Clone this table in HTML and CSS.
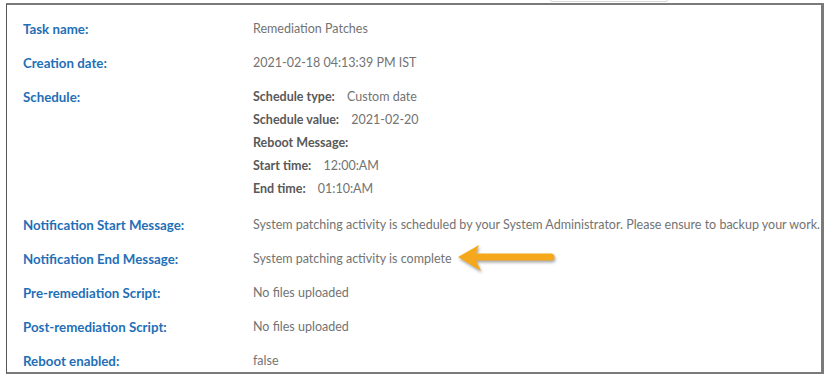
FILE: index.html
```html
<!DOCTYPE html>
<html lang="en">
<head>
  <meta charset="UTF-8" />
  <title>Task details</title>
  <link rel="stylesheet" href="styles.css">
</head>
<body>

<div class="topbox"></div>

<div class="panel">
  <div class="row">
    <div class="label">Task name:</div>
    <div class="value">Remediation Patches</div>
  </div>
  <div class="row">
    <div class="label">Creation date:</div>
    <div class="value">2021-02-18 04:13:39 PM IST</div>
  </div>
  <div class="row">
    <div class="label">Schedule:</div>
    <div class="value schedule">
      <div><b>Schedule type:</b> Custom date</div>
      <div><b>Schedule value:</b> 2021-02-20</div>
      <div><b>Reboot Message:</b></div>
      <div><b>Start time:</b> 12:00:AM</div>
      <div><b>End time:</b> 01:10:AM</div>
    </div>
  </div>
  <div class="row">
    <div class="label">Notification Start Message:</div>
    <div class="value">System patching activity is scheduled by your System Administrator. Please ensure to backup your work.</div>
  </div>
  <div class="row">
    <div class="label">Notification End Message:</div>
    <div class="value">System patching activity is complete
      <svg class="arrow" width="104" height="30" viewBox="0 0 104 30">
        <path d="M1 12 L22 0 L19 8.5 L94 8.5 A3.5 3.5 0 0 1 94 15.5 L19 15.5 L24 26 Z" fill="#f5a81c"/>
      </svg>
    </div>
  </div>
  <div class="row">
    <div class="label">Pre-remediation Script:</div>
    <div class="value">No files uploaded</div>
  </div>
  <div class="row">
    <div class="label">Post-remediation Script:</div>
    <div class="value">No files uploaded</div>
  </div>
  <div class="row">
    <div class="label">Reboot enabled:</div>
    <div class="value">false</div>
  </div>
</div>

</body>
</html>
```

FILE: styles.css
```css
* { margin: 0; padding: 0; box-sizing: border-box; }
body { background: #fff; font-family: "Source Sans Pro", Lato, "Open Sans", sans-serif; font-size: 12.5px; color: #737373; width: 825px; height: 378px; overflow: hidden; position: relative; }
.topbox { position: absolute; left: 550px; top: -6px; width: 118px; height: 8px; border: 1px solid #d8d8d8; border-radius: 2px; background: #fff; }
.panel { margin: 3px 0 0 6px; width: 818px; height: 371px; border-top: 2px solid #7a7a7a; border-left: 1px solid #555; border-right: 3px solid #7a7a7a; border-bottom: 2px solid #7a7a7a; padding: 7px 0 0 16px; overflow: hidden; white-space: nowrap; }
.row { display: grid; grid-template-columns: 230px auto; }
.label { color: #1f6fb6; font-weight: bold; font-size: 13.3px; line-height: 34px; }
.value { line-height: 34px; display: flex; align-items: center; height: 34px; }
.value.schedule { display: block; height: auto; line-height: 23px; padding: 5px 0 8px; }
.schedule b { color: #595959; margin-right: 9px; }
.arrow { margin-left: 5px; margin-top: 2px; filter: drop-shadow(1px 2px 1.5px rgba(0,0,0,0.35)); }
```
